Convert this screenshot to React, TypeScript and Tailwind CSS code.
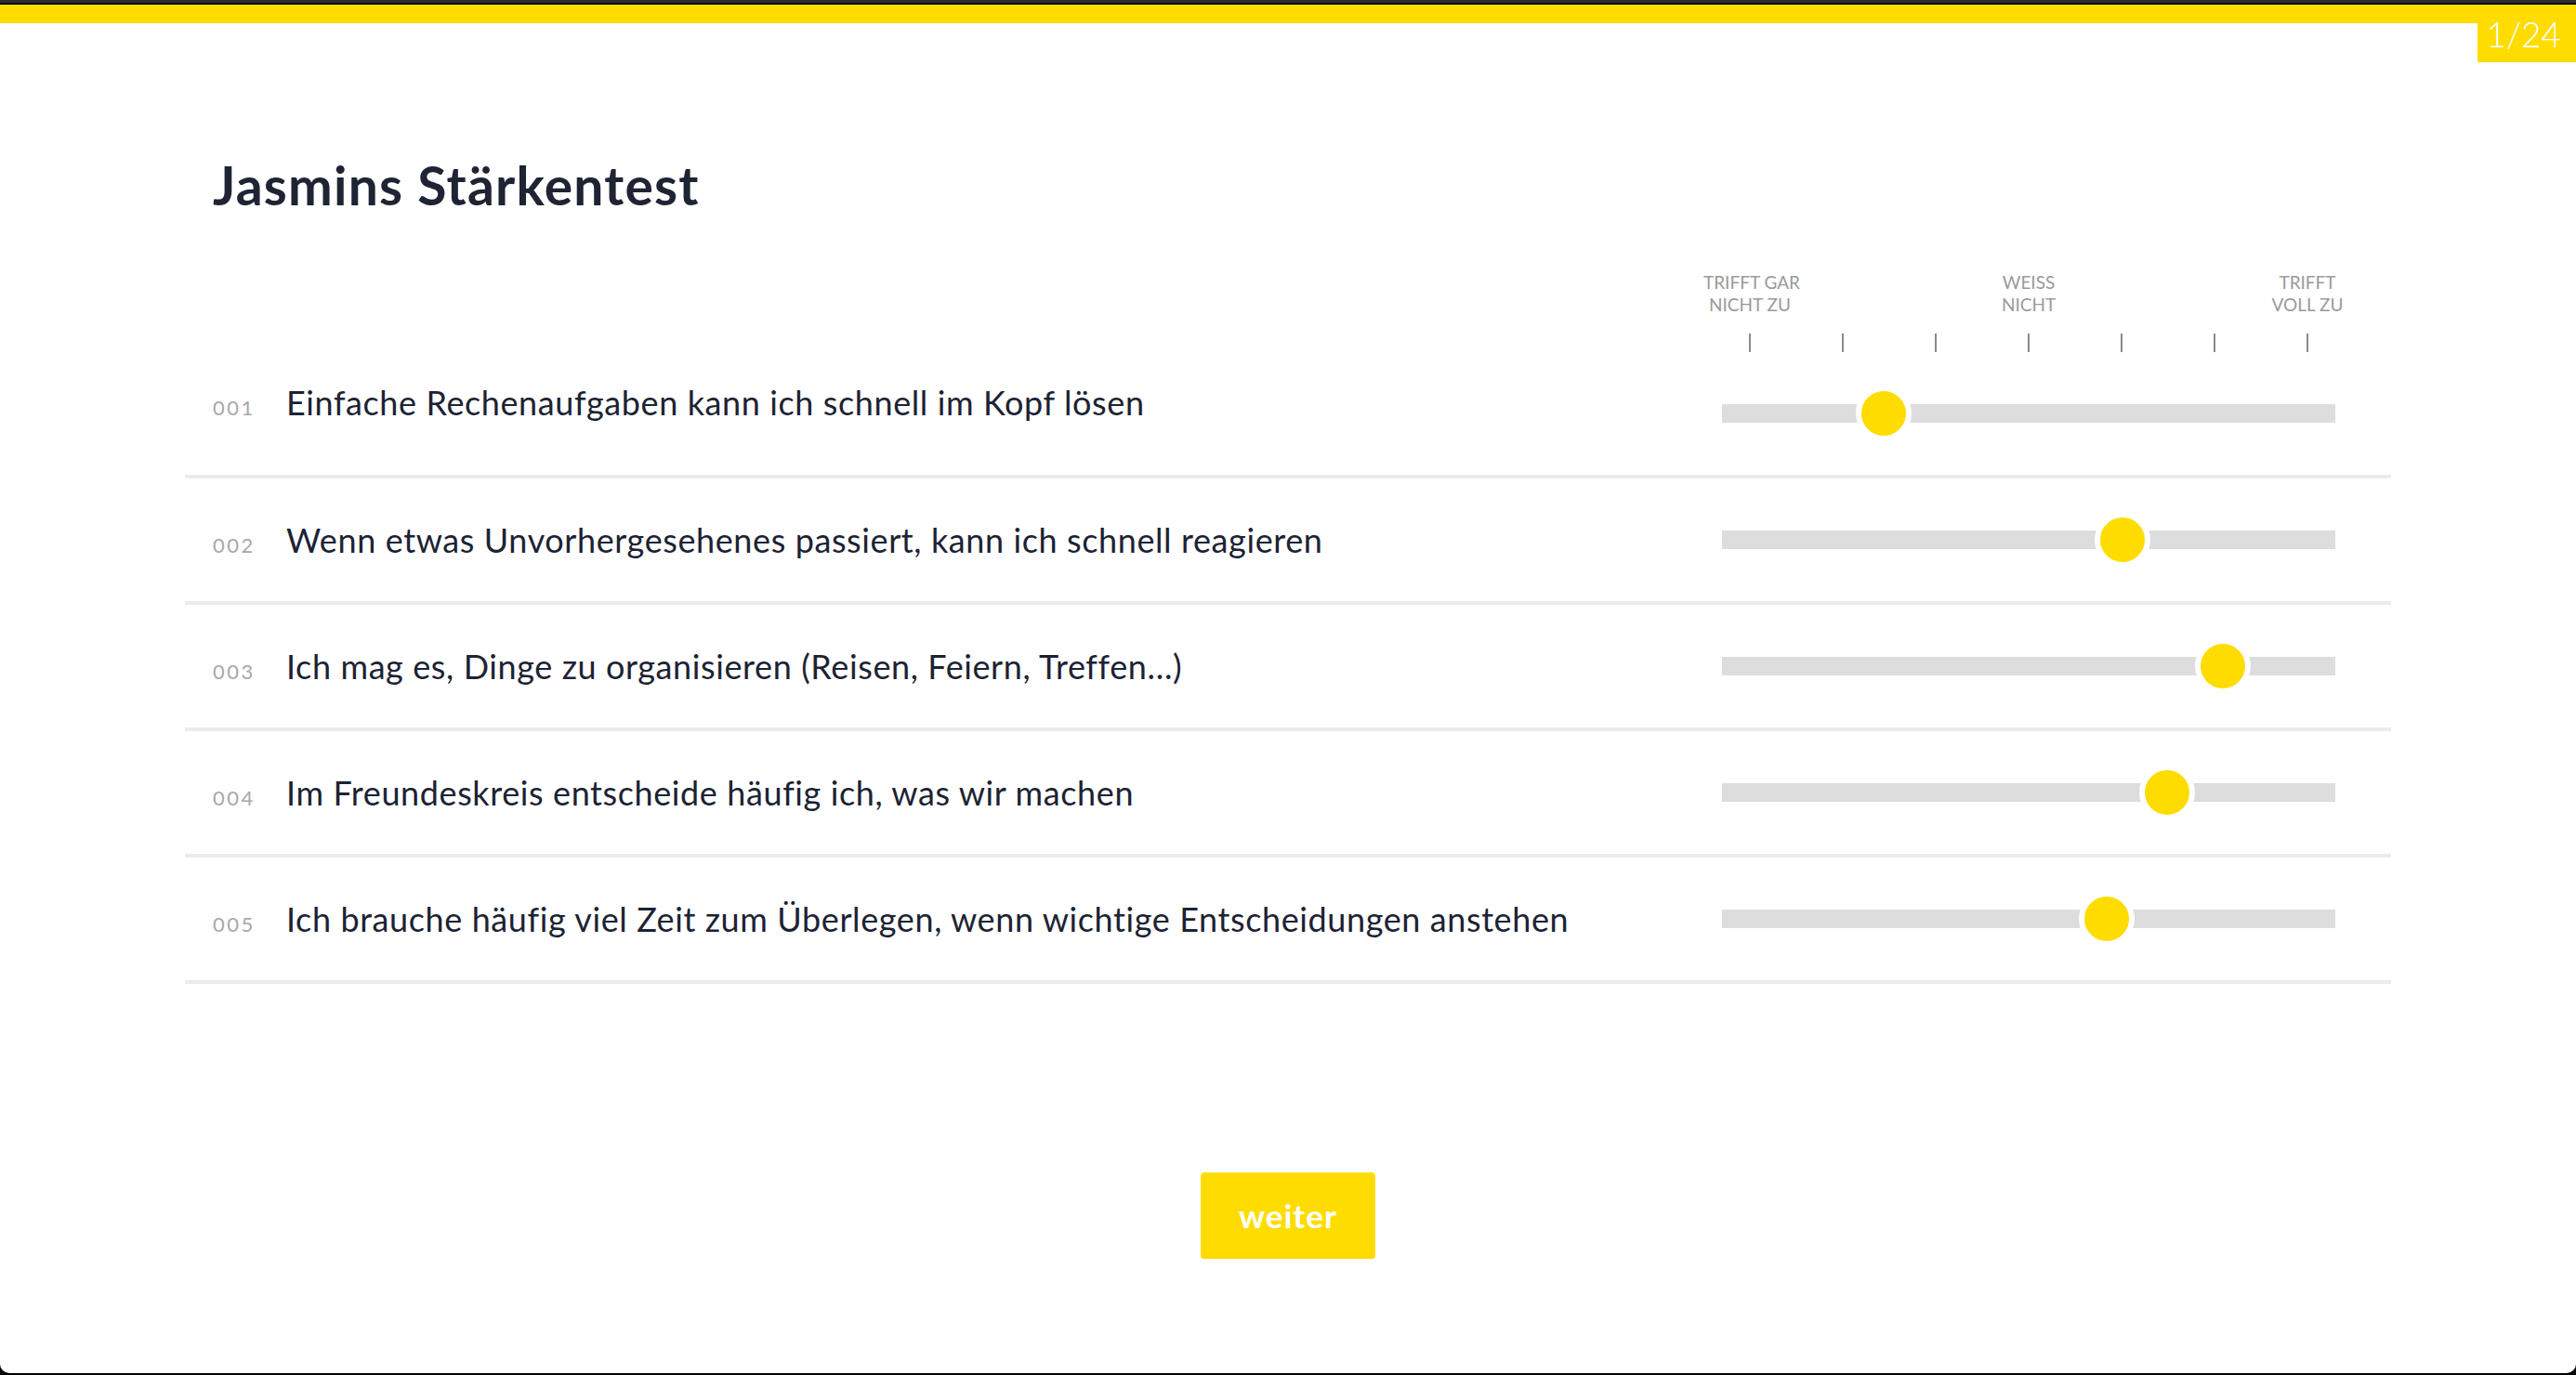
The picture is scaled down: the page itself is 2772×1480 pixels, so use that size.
import React from 'react';

const questions = [
  { nr: '001', text: 'Einfache Rechenaufgaben kann ich schnell im Kopf lösen', value: 144 },
  { nr: '002', text: 'Wenn etwas Unvorhergesehenes passiert, kann ich schnell reagieren', value: 401 },
  { nr: '003', text: 'Ich mag es, Dinge zu organisieren (Reisen, Feiern, Treffen…)', value: 509 },
  { nr: '004', text: 'Im Freundeskreis entscheide häufig ich, was wir machen', value: 449 },
  { nr: '005', text: 'Ich brauche häufig viel Zeit zum Überlegen, wenn wichtige Entscheidungen anstehen', value: 384 },
];

const Slider: React.FC<{ value: number }> = ({ value }) => (
  <div className="relative h-[20px] w-[660px] bg-[#dddddd]">
    <div
      className="absolute top-1/2 -translate-y-1/2 w-[60px] h-[60px] rounded-full bg-[#ffdc00] border-[6px] border-white"
      style={{ left: value }}
    />
  </div>
);

const App: React.FC = () => {
  return (
    <div className="h-[1480px] w-[2772px] bg-black overflow-hidden font-['Lato',sans-serif]">
      <div className="relative h-[1478px] bg-white rounded-b-[10px] overflow-hidden">
        {/* top bars */}
        <div className="h-[3px] bg-[#2e2e2e]" />
        <div className="h-[2px] bg-[#0c0c0c]" />
        <div className="h-[20px] bg-[#ffdc00]" />
        <div className="absolute right-0 top-[5px] w-[106px] h-[62px] bg-[#ffdc00] flex justify-end pr-[16px] pt-[12px]">
          <span className="text-white text-[37px] leading-[40px] font-light">1/24</span>
        </div>

        <div className="ml-[199px] w-[2374px]">
          <h1 className="mt-[146px] pl-[30px] text-[57px] leading-[56px] font-bold tracking-[1.2px] text-[#1e2433]">
            Jasmins Stärkentest
          </h1>

          {/* scale header */}
          <div className="mt-[65px] ml-[1634px] w-[700px]">
            <div className="grid grid-cols-7 text-[19px] leading-[24px] text-[#9a9a9a] uppercase">
              <div className="text-center whitespace-nowrap">Trifft gar<br />nicht zu</div>
              <div />
              <div />
              <div className="text-center whitespace-nowrap">Weiss<br />nicht</div>
              <div />
              <div />
              <div className="text-center whitespace-nowrap">Trifft<br />voll zu</div>
            </div>
            <div className="grid grid-cols-7 mt-[19px] h-[20px]">
              {Array.from({ length: 7 }).map((_, i) => (
                <div key={i} className="flex justify-center">
                  <div className="w-[2px] h-[20px] bg-[#8a8a8a]" />
                </div>
              ))}
            </div>
          </div>

          {/* questions */}
          {questions.map((q, i) => (
            <div key={q.nr} className="flex items-center h-[136px] border-b-4 border-[#ebebeb]">
              <div className={`flex items-baseline pl-[30px] flex-1 ${i === 0 ? 'mb-[24px]' : ''}`}>
                <span className="w-[79px] shrink-0 text-[22px] tracking-[2.5px] text-[#a8a8a8]">{q.nr}</span>
                <span className="text-[36px] tracking-[0.6px] text-[#1c2333]">{q.text}</span>
              </div>
              <div className="mr-[60px]">
                <Slider value={q.value} />
              </div>
            </div>
          ))}
        </div>

        <div className="flex justify-center mt-[203px]">
          <button className="w-[188px] h-[93px] rounded-[4px] bg-[#ffdc00] text-white text-[35px] font-bold tracking-[1px]">
            weiter
          </button>
        </div>
      </div>
    </div>
  );
};

export default App;
